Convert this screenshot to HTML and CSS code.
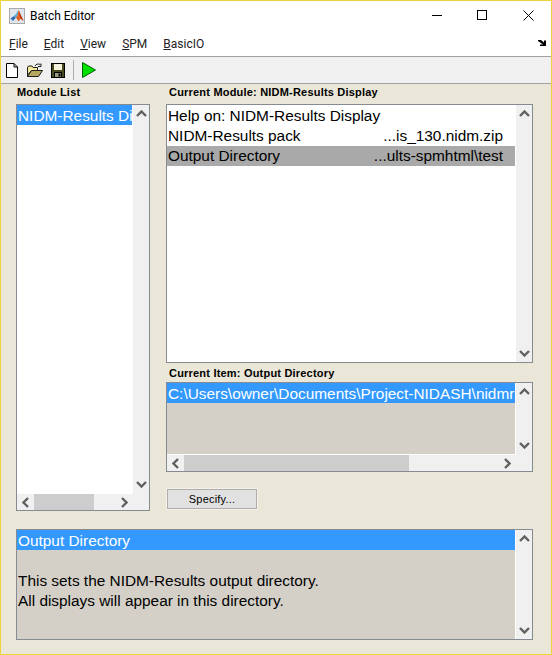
FILE: index.html
```html
<!DOCTYPE html>
<html lang="en">
<head>
    <meta charset="UTF-8">
    <meta name="viewport" content="width=device-width, initial-scale=1.0">
    <title>Batch Editor</title>
    <link rel="stylesheet" href="styles.css">
</head>
<body>
<svg class="defs" width="0" height="0">
    <symbol id="chev-up" viewBox="0 0 11 7"><path d="M1 6 5.500 1.500 10 6" fill="none" stroke="#606060" stroke-width="2.400"/></symbol>
    <symbol id="chev-down" viewBox="0 0 11 7"><path d="M1 1 5.500 5.500 10 1" fill="none" stroke="#606060" stroke-width="2.400"/></symbol>
    <symbol id="chev-left" viewBox="0 0 7 11"><path d="M6 1 1.500 5.500 6 10" fill="none" stroke="#606060" stroke-width="2.400"/></symbol>
    <symbol id="chev-right" viewBox="0 0 7 11"><path d="M1 1 5.500 5.500 1 10" fill="none" stroke="#606060" stroke-width="2.400"/></symbol>
</svg>
<div class="window">
    <!-- Title bar -->
    <div class="titlebar">
        <svg class="app-icon" width="16" height="16" viewBox="0 0 16 16">
            <rect x="0.5" y="0.5" width="15" height="15" fill="#dfe6ee" stroke="#a8a8a8"/>
            <path d="M1.500 10.500 5 8 7 9.500 4 13Z" fill="#2f6fb5"/>
            <path d="M5 8 7 6 9.500 2 8.500 8 7 9.500Z" fill="#57a7d8"/>
            <path d="M9.500 2 14.500 13 11.500 10.500 9.500 13.500 7 9.500 8.500 8Z" fill="#e2601c"/>
            <path d="M9.500 2 14.500 13 11.500 10.500Z" fill="#b8321a"/>
        </svg>
        <span class="title-text">Batch Editor</span>
        <div class="win-buttons">
            <svg width="11" height="11" viewBox="0 0 11 11"><path d="M1 5.500H11" stroke="#000"/></svg>
            <svg width="11" height="11" viewBox="0 0 11 11"><rect x="0.500" y="0.500" width="9" height="9" fill="none" stroke="#000"/></svg>
            <svg width="11" height="11" viewBox="0 0 11 11"><path d="M0.500 0.500 10.500 10.500M10.500 0.500 0.500 10.500" stroke="#000" fill="none"/></svg>
        </div>
    </div>

    <!-- Menu bar -->
    <div class="menubar">
        <span class="menu-item"><u>F</u>ile</span>
        <span class="menu-item"><u>E</u>dit</span>
        <span class="menu-item"><u>V</u>iew</span>
        <span class="menu-item"><u>S</u>PM</span>
        <span class="menu-item"><u>B</u>asicIO</span>
        <svg class="dock-arrow" width="8" height="6" viewBox="0 0 8 6"><path d="M0 0H3L6 2.500V0.500H8V6H2V4.500H5L0 1Z" fill="#000"/></svg>
    </div>

    <!-- Toolbar -->
    <div class="toolbar">
        <svg width="12" height="15" viewBox="0 0 12 15"><path d="M.5.5H8L11.500 4V14.500H.5Z M8 .5V4H11.500" fill="#fff" stroke="#000"/></svg>
        <svg class="open-icon" width="16" height="15" viewBox="0 0 16 15"><path d="M.5 4.500V13.500H11.500L15.500 7.500H4.500L.5 13.500Z" fill="#b8a860" stroke="#1e1e1e"/><path d="M.5 12V4.500L1.500 3H5L6 4.500H10.500V7.500H4.500Z" fill="#f6ea9a" stroke="#1e1e1e"/><path d="M8 3C9 1 11 .5 13.500 1.500M14 .5V3.500H11" fill="none" stroke="#1e1e1e"/></svg>
        <svg width="14" height="15" viewBox="0 0 14 15"><rect x=".5" y=".5" width="13" height="14" fill="#4a4a20" stroke="#000"/><rect x="3" y="1" width="8" height="6" fill="#f4f2dc"/><rect x="3.500" y="9.500" width="7" height="5" fill="#9a9a80" stroke="#000"/><rect x="7.500" y="10.500" width="2" height="3" fill="#000"/></svg>
        <span class="tool-sep"></span>
        <svg width="14" height="16" viewBox="0 0 14 16"><path d="M.5.5 13.500 8 .5 15.500Z" fill="#00e000" stroke="#006000"/></svg>
    </div>

    <!-- Main content -->
    <div class="content">
        <div class="columns">
            <div class="left-col">
                <div class="label">Module List</div>
                <div class="listbox module-list">
                    <div class="list-main">
                        <div class="list-body">
                            <div class="row selected clip">NIDM-Results Display</div>
                        </div>
                        <div class="vscroll">
                            <svg width="11" height="7"><use href="#chev-up"/></svg>
                            <svg width="11" height="7"><use href="#chev-down"/></svg>
                        </div>
                    </div>
                    <div class="hscroll">
                        <svg width="7" height="11"><use href="#chev-left"/></svg>
                        <div class="htrack"><div class="hthumb thumb-module"></div></div>
                        <svg width="7" height="11"><use href="#chev-right"/></svg>
                    </div>
                </div>
            </div>

            <div class="right-col">
                <div class="label label-right">Current Module: NIDM-Results Display</div>
                <div class="listbox module-items">
                    <div class="list-main">
                        <div class="list-body items-body">
                            <div class="row">Help on: NIDM-Results Display</div>
                            <div class="row split"><span>NIDM-Results pack</span><span>...is_130.nidm.zip</span></div>
                            <div class="row split current"><span>Output Directory</span><span>...ults-spmhtml\test</span></div>
                        </div>
                        <div class="vscroll">
                            <svg width="11" height="7"><use href="#chev-up"/></svg>
                            <svg width="11" height="7"><use href="#chev-down"/></svg>
                        </div>
                    </div>
                </div>

                <div class="label label-right label-item">Current Item: Output Directory</div>
                <div class="listbox item-box">
                    <div class="list-main">
                        <div class="list-body grey">
                            <div class="row selected clip">C:\Users\owner\Documents\Project-NIDASH\nidmresults-spmhtml\test</div>
                        </div>
                        <div class="vscroll">
                            <svg width="11" height="7"><use href="#chev-up"/></svg>
                            <svg width="11" height="7"><use href="#chev-down"/></svg>
                        </div>
                    </div>
                    <div class="hscroll">
                        <svg width="7" height="11"><use href="#chev-left"/></svg>
                        <div class="htrack"><div class="hthumb thumb-item"></div></div>
                        <svg width="7" height="11"><use href="#chev-right"/></svg>
                    </div>
                </div>

                <button class="specify">Specify...</button>
            </div>
        </div>

        <div class="listbox help-box">
            <div class="list-main">
                <div class="list-body grey">
                    <div class="row selected">Output Directory</div>
                    <div class="row">&nbsp;</div>
                    <div class="row">This sets the NIDM-Results output directory.</div>
                    <div class="row">All displays will appear in this directory.</div>
                </div>
                <div class="vscroll">
                    <svg width="11" height="7"><use href="#chev-up"/></svg>
                    <svg width="11" height="7"><use href="#chev-down"/></svg>
                </div>
            </div>
        </div>
    </div>
</div>
</body>
</html>
```

FILE: styles.css
```css
html, body {
    margin: 0;
    padding: 0;
}
.defs {
    position: absolute;
}
.window {
    box-sizing: border-box;
    width: 552px;
    height: 655px;
    border: 1px solid #f0d33a;
    background-color: #ebe7d8;
    display: flex;
    flex-direction: column;
    font-family: "Liberation Sans", Arial, sans-serif;
    color: #000;
    overflow: hidden;
}

/* Title bar */
.titlebar {
    height: 29px;
    background-color: #fff;
    display: flex;
    align-items: center;
    padding-left: 8px;
}
.app-icon {
    margin-right: 5px;
}
.title-text {
    font-family: Roboto, sans-serif;
    font-size: 12px;
}
.win-buttons {
    margin-left: auto;
    display: flex;
    gap: 35px;
    padding-right: 17px;
}

/* Menu bar */
.menubar {
    box-sizing: border-box;
    height: 26px;
    background-color: #fff;
    display: flex;
    align-items: center;
    gap: 16px;
    padding: 2px 5px 0 8px;
    font-family: Roboto, sans-serif;
    font-size: 12px;
    color: #222;
}
.dock-arrow {
    margin-left: auto;
    margin-top: -2px;
}

/* Toolbar */
.toolbar {
    height: 26px;
    background-color: #f0f0f0;
    border-top: 1px solid #a0a0a0;
    border-bottom: 1px solid #a0a0a0;
    display: flex;
    align-items: center;
    gap: 8px;
    padding-left: 5px;
}
.open-icon {
    margin-left: 1px;
}
.tool-sep {
    width: 1px;
    height: 20px;
    background-color: #b0b0b0;
}

/* Main layout */
.content {
    flex: 1;
    padding: 0 18px 0 15px;
}
.columns {
    display: flex;
    gap: 16px;
}
.left-col {
    width: 134px;
}
.right-col {
    width: 367px;
}
.label {
    box-sizing: border-box;
    height: 20px;
    padding: 1px 0 0 1px;
    font-size: 11px;
    font-weight: bold;
    line-height: 14px;
    letter-spacing: 0.2px;
}
.label-right {
    padding-left: 3px;
}
.label-item {
    height: 19px;
    padding-top: 3px;
}

/* List boxes */
.listbox {
    box-sizing: border-box;
    border: 1px solid #858b90;
    background-color: #f0f0f0;
    display: flex;
    flex-direction: column;
}
.module-list {
    height: 407px;
}
.module-items {
    height: 259px;
}
.item-box {
    height: 90px;
}
.help-box {
    height: 111px;
    margin-top: 18px;
}
.list-main {
    flex: 1;
    display: flex;
    min-height: 0;
}
.list-body {
    flex: 1;
    min-width: 0;
    background-color: #fff;
    border-right: 1px solid #fff;
    font-size: 15.4px;
}
.grey {
    background-color: #d4d0c8;
}
.row {
    height: 20px;
    line-height: 22px;
    padding-left: 1px;
    white-space: nowrap;
}
.items-body {
    padding-top: 1px;
}
.items-body .row {
    line-height: 20px;
}
.clip {
    overflow: hidden;
}
.split {
    display: flex;
    justify-content: space-between;
    padding-right: 12px;
}
.selected {
    background-color: #3399ff;
    color: #fff;
}
.current {
    background-color: #a9a9a9;
}

/* Scrollbars */
.vscroll {
    box-sizing: border-box;
    width: 16px;
    flex: none;
    display: flex;
    flex-direction: column;
    justify-content: space-between;
    align-items: center;
    padding: 5px 0;
}
.hscroll {
    height: 16px;
    flex: none;
    display: flex;
    align-items: center;
    gap: 5px;
    margin-right: 16px;
    padding: 0 5px;
    border-top: 1px solid #fff;
}
.htrack {
    flex: 1;
    height: 100%;
}
.hthumb {
    height: 100%;
    background-color: #cdcdcd;
}
.thumb-module {
    width: 60px;
}
.thumb-item {
    width: 225px;
}

/* Button */
.specify {
    display: block;
    box-sizing: border-box;
    width: 90px;
    height: 20px;
    margin: 17px 0 0 1px;
    padding: 0;
    border: 1px solid #adadad;
    box-shadow: 0 0 0 1px #f4f2e8;
    background-color: #e1e1e1;
    font-family: "Liberation Sans", Arial, sans-serif;
    font-size: 11px;
    letter-spacing: 0.2px;
    color: #000;
}
```
